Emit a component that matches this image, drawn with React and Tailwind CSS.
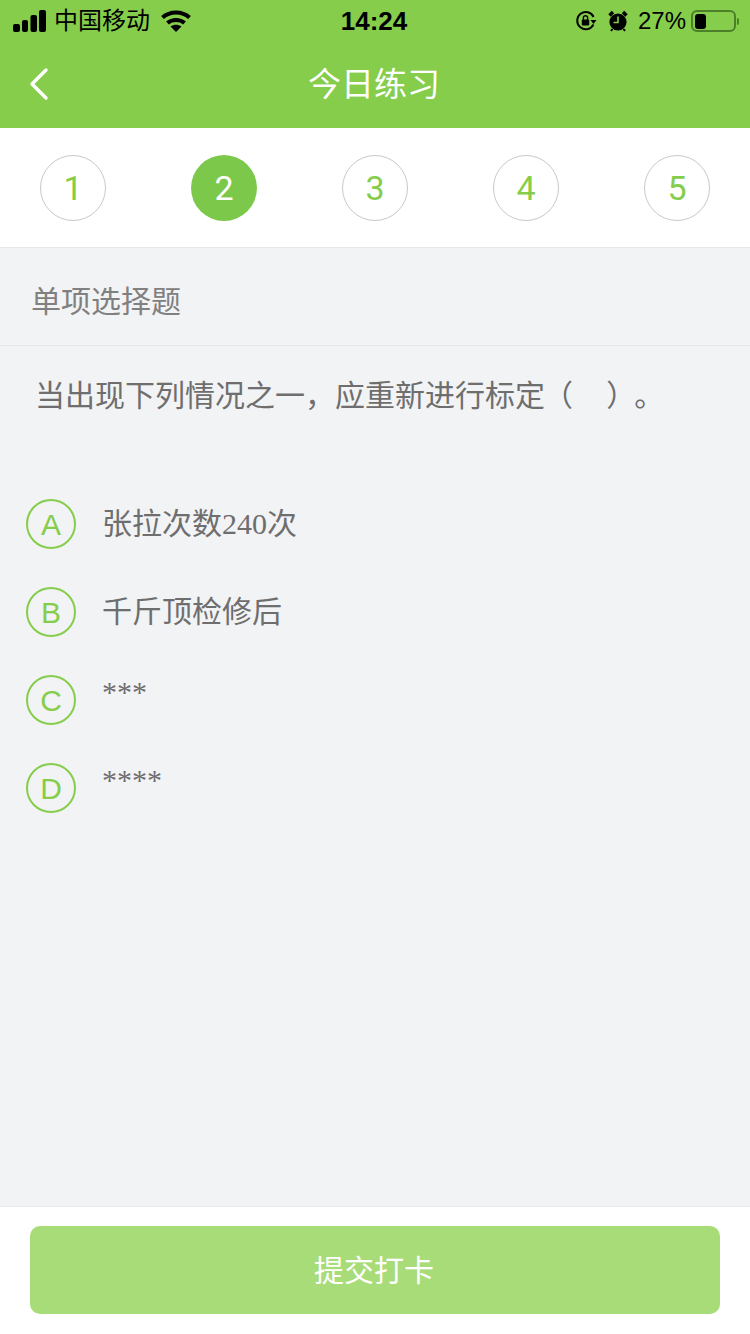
const sans = { fontFamily: '"Liberation Sans", "Noto Sans CJK SC", sans-serif' };
const digits = { fontFamily: "Roboto, sans-serif" };

const options = [
  { letter: "A", text: "张拉次数240次" },
  { letter: "B", text: "千斤顶检修后" },
  { letter: "C", text: "***", stars: true },
  { letter: "D", text: "****", stars: true },
];

function SignalIcon() {
  return (
    <svg width="33" height="22" viewBox="0 0 33 22" fill="#000">
      <rect x="0" y="14" width="7" height="8" rx="2" />
      <rect x="9" y="10" width="6" height="12" rx="2" />
      <rect x="17.500" y="5" width="6.500" height="17" rx="2" />
      <rect x="26" y="0" width="7" height="22" rx="2" />
    </svg>
  );
}

function WifiIcon() {
  return (
    <svg width="30" height="22" viewBox="0 0 30 22" fill="none" stroke="#000" strokeWidth="4">
      <path d="M1.5 7.5 C9 0.8 21 0.8 28.5 7.5" />
      <path d="M6.5 13 C11 9 19 9 23.5 13" />
      <path d="M15 22 L9.5 16.5 C13 14 17 14 20.5 16.5 Z" fill="#000" stroke="none" />
    </svg>
  );
}

function LockIcon() {
  return (
    <svg width="22" height="22" viewBox="0 0 22 22" fill="none">
      <path d="M18.5 14.5 A8.6 8.6 0 1 1 18.6 7" stroke="#000" strokeWidth="1.9" />
      <path d="M15.5 10 L21.5 10 L18.5 14 Z" fill="#000" />
      <rect x="6.8" y="9.5" width="7.4" height="6" rx="1" fill="#000" />
      <path d="M8.4 10 V7.8 A2.1 2.1 0 0 1 12.6 7.8 V10" stroke="#000" strokeWidth="1.4" />
    </svg>
  );
}

function AlarmIcon() {
  return (
    <svg width="20" height="22" viewBox="0 0 20 22" fill="none">
      <circle cx="10" cy="12" r="8.6" fill="#000" />
      <path d="M1.5 5.5 L5 2 M15 2 L18.5 5.5" stroke="#000" strokeWidth="3.4" />
      <path d="M4.5 19 L3 21 M15.5 19 L17 21" stroke="#000" strokeWidth="2" />
      <path d="M10 6.5 V12.5 H5.5" stroke="#86cd4b" strokeWidth="1.6" />
    </svg>
  );
}

function BackIcon() {
  return (
    <svg width="20" height="34" viewBox="0 0 20 34" fill="none" stroke="#fff" strokeWidth="3.4" strokeLinecap="round" strokeLinejoin="round">
      <path d="M17 3 L3 17 L17 31" />
    </svg>
  );
}

function StatusBar() {
  return (
    <div className="relative flex h-10 items-center justify-between pl-[13px] pr-[11px] pt-[2px] text-black">
      <div className="flex items-center">
        <SignalIcon />
        <span className="ml-[8px] text-[24px] leading-none" style={sans}>中国移动</span>
        <span className="ml-[11px]"><WifiIcon /></span>
      </div>
      <span className="absolute left-0 right-[2px] text-center text-[26px] font-bold" style={sans}>14:24</span>
      <div className="flex items-center">
        <LockIcon />
        <span className="ml-[11px]"><AlarmIcon /></span>
        <span className="ml-[10px] text-[24px] leading-none" style={sans}>27%</span>
        <div className="ml-[5px] flex h-[22px] w-[45px] items-center rounded-[6px] border-2 border-[#4c7f2a] p-[2px]">
          <div className="h-[15px] w-[11px] rounded-[3px] bg-black" />
        </div>
        <div className="ml-[1px] h-[7px] w-[2px] rounded-r-sm bg-[#4c7f2a]" />
      </div>
    </div>
  );
}

export default function App() {
  const steps = [1, 2, 3, 4, 5];

  return (
    <div className="flex h-[1334px] w-[750px] flex-col bg-[#f2f3f5]" style={sans}>
      <div className="h-32 bg-[#86cd4b]">
        <StatusBar />
        <div className="relative flex h-[88px] items-center justify-center pt-[2px] pr-[2px]">
          <span className="absolute left-[29px] top-[27px]"><BackIcon /></span>
          <span className="text-[33px] text-white">今日练习</span>
        </div>
      </div>

      <div className="flex h-[120px] items-start justify-between border-b border-[#e8e8e8] bg-white px-10 pt-[27px]">
        {steps.map((n) =>
          n === 2 ? (
            <div key={n} className="flex h-[66px] w-[66px] items-center justify-center rounded-full bg-[#7cc84a] text-[34px] text-white" style={digits}>
              {n}
            </div>
          ) : (
            <div key={n} className="flex h-[66px] w-[66px] items-center justify-center rounded-full border border-[#c9c9c9] text-[34px] text-[#86cd4b]" style={digits}>
              {n}
            </div>
          )
        )}
      </div>

      <div className="flex h-[98px] items-center border-b border-[#e6e7e9] pl-[31px] pt-[10px] text-[30px] text-[#808080]">
        单项选择题
      </div>

      <div className="pl-[35px] pt-[28px] text-[30px] leading-[44px] text-[#6e6e6e]">
        当出现下列情况之一，应重新进行标定
        <span className="-ml-[2px]">（</span>
        &nbsp;&nbsp;&nbsp;&nbsp;）
        <span className="ml-[13px]">。</span>
      </div>

      <div className="mt-[81px] flex flex-col gap-[38px] pl-[26px]">
        {options.map((o) => (
          <div key={o.letter} className="flex h-[50px] items-start">
            <div className="flex h-[50px] w-[50px] shrink-0 items-center justify-center rounded-full border-2 border-[#86cd4b] text-[30px] text-[#86cd4b]">
              {o.letter}
            </div>
            <div
              className={`ml-[26px] text-[30px] text-[#6e6e6e] ${o.stars ? "leading-[34px]" : "leading-[50px]"}`}
              style={{ fontFamily: '"Liberation Serif", "Noto Sans CJK SC", serif' }}
            >
              {o.text}
            </div>
          </div>
        ))}
      </div>

      <div className="mt-auto flex h-[128px] items-start border-t border-[#e8e8e8] bg-white px-[30px] pt-[19px]">
        <div className="flex h-[88px] w-full items-center justify-center rounded-[10px] bg-[#a8dc78] pr-[2px] text-[30px] text-white">
          提交打卡
        </div>
      </div>
    </div>
  );
}
